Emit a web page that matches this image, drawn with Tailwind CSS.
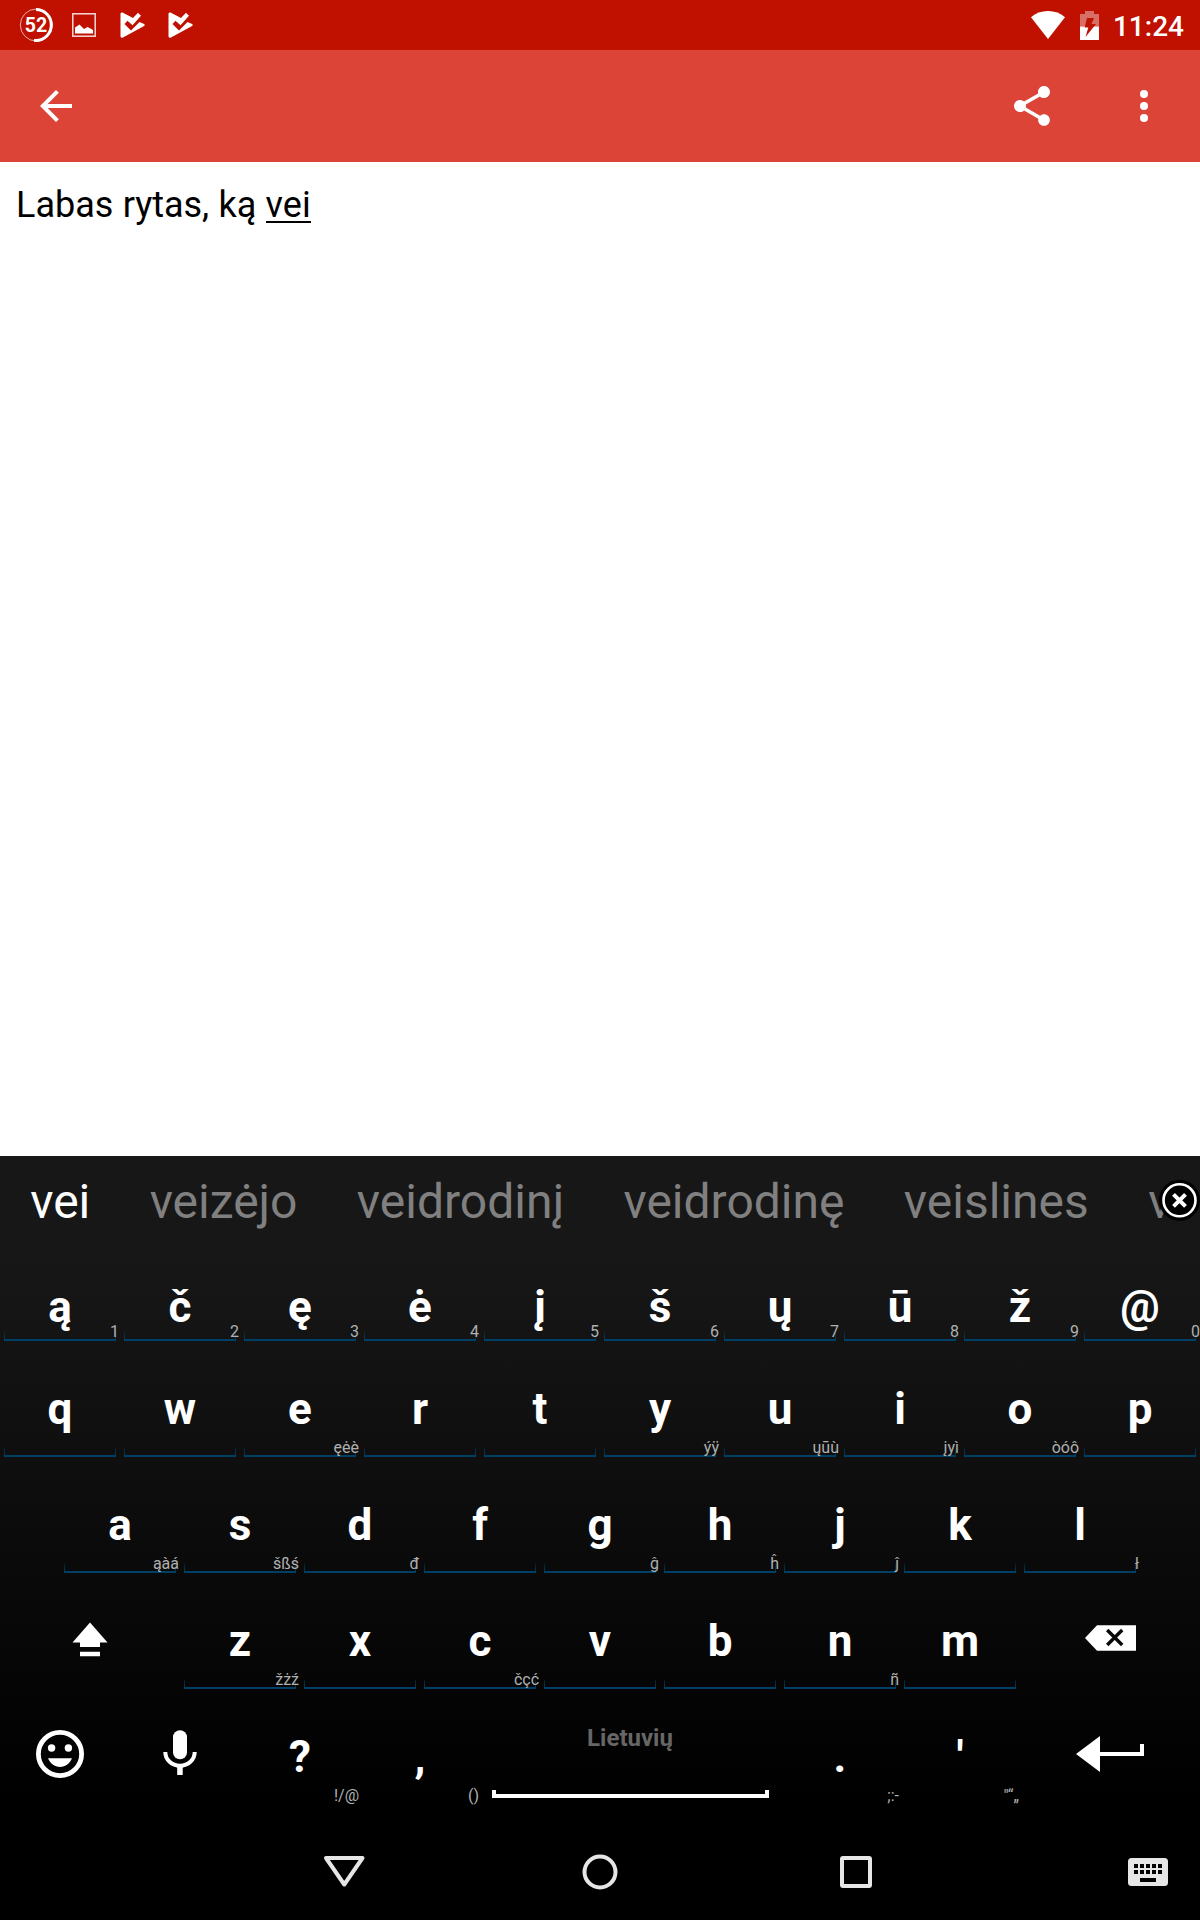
<!DOCTYPE html>
<html lang="lt">
<head>
<meta charset="utf-8">
<title>Labas rytas</title>
<script src="https://cdn.jsdelivr.net/npm/@tailwindcss/browser@4"></script>
</head>
<body class="bg-white font-['Roboto',sans-serif] w-[1200px] h-[1920px] overflow-hidden flex flex-col">

<!-- status bar -->
<header class="h-[50px] shrink-0 bg-[#bf1000] text-white flex items-center justify-between pl-[19px] pr-[16px]">
  <div class="flex items-center h-full">
    <div class="w-[35px] h-[50px] flex items-center justify-center relative">
      <svg class="absolute inset-0" width="35" height="50" viewBox="0 0 35 50" fill="none" stroke="#fff"><circle cx="17.3" cy="25" r="16" stroke-width="1" opacity=".65"/><path d="M17 9.5a15.3 15.5 0 0 1 0 31h-2" stroke-width="3"/></svg>
      <span class="text-[19.5px] font-bold leading-[20px] pt-[2px] pr-px relative">52</span>
    </div>
    <svg class="ml-[18px]" width="24" height="24" viewBox="0 0 24 24"><rect x=".8" y=".8" width="22.4" height="22.4" fill="none" stroke="#fff" stroke-opacity=".85" stroke-width="1.5"/><path d="M3 20.5v-6l4.500-3 4.500 4.500 3.500-2 2 1 3.500 2v3.500z" fill="#fff"/></svg>
    <svg class="ml-[24px]" width="26" height="26" viewBox="0 0 26 26"><path d="M.5 1.500Q1 0 2.500.5L13 6l5-5.200 3 3-8.500 9.500-5-4.500-3 3.200L11 18.500 19.500 10l4.600 2q1.200.8 0 2L3 25.500q-2 .8-2.500-1z" fill="#fff"/></svg>
    <svg class="ml-[22px]" width="26" height="26" viewBox="0 0 26 26"><path d="M.5 1.500Q1 0 2.500.5L13 6l5-5.200 3 3-8.500 9.500-5-4.500-3 3.200L11 18.500 19.500 10l4.600 2q1.200.8 0 2L3 25.500q-2 .8-2.500-1z" fill="#fff"/></svg>
  </div>
  <div class="flex items-center">
    <svg width="34" height="28" viewBox="0 0 34 28"><path d="M17 28 0 6.200Q7 0 17 0t17 6.200z" fill="#fff"/></svg>
    <svg class="ml-[15px]" width="19" height="29" viewBox="0 0 19 29"><path d="M5 0h9v3h5v12.500H0V3h5z" fill="#fff" opacity=".4"/><path d="M0 15.500h19V29H0z" fill="#fff"/><path d="M7 7h7l-2.500 6H16L5.500 26l2.800-9.500H4.700z" fill="#bf1000"/></svg>
    <span class="ml-[14px] text-[28px] font-medium leading-[28px] pt-[4px]">11:24</span>
  </div>
</header>

<!-- app bar -->
<nav class="h-[112px] shrink-0 bg-[#db4437] flex items-center justify-between pl-[32px] pr-[32px]">
  <svg width="48" height="48" viewBox="0 0 24 24" fill="#fff"><path d="M20 11H7.830l5.590-5.590L12 4l-8 8 8 8 1.410-1.410L7.830 13H20z"/></svg>
  <div class="flex gap-16">
    <svg width="48" height="48" viewBox="0 0 24 24" fill="#fff"><path d="M18 16.080c-.76 0-1.440.3-1.960.77L8.910 12.700c.05-.23.09-.46.09-.7s-.04-.47-.09-.7l7.050-4.110c.54.5 1.250.81 2.040.81 1.660 0 3-1.340 3-3s-1.340-3-3-3-3 1.340-3 3c0 .24.04.47.09.7L8.040 9.810C7.500 9.310 6.790 9 6 9c-1.660 0-3 1.340-3 3s1.340 3 3 3c.79 0 1.500-.31 2.040-.81l7.120 4.160c-.05.21-.08.43-.08.65 0 1.610 1.310 2.920 2.920 2.920s2.920-1.310 2.920-2.920-1.310-2.920-2.920-2.920z"/></svg>
    <svg width="48" height="48" viewBox="0 0 24 24" fill="#fff"><circle cx="12" cy="6" r="2"/><circle cx="12" cy="12" r="2"/><circle cx="12" cy="18" r="2"/></svg>
  </div>
</nav>

<!-- editor -->
<main class="h-[994px] shrink-0 px-[16px] pt-[21px] text-[36px] leading-[44px] [word-spacing:0.35px] text-black">Labas rytas, ką <span class="inline-block h-[40px] border-b-2 border-black">vei</span></main>

<!-- keyboard -->
<section class="flex-1 flex flex-col bg-black">
  <div class="h-[101px] shrink-0 bg-[#171717] relative overflow-hidden flex whitespace-nowrap text-[48px] leading-[56px] pt-[18px] pl-[0.5px] text-[#808080]">
    <span class="px-[29.7px] text-white">vei</span><span class="px-[29.7px]">veizėjo</span><span class="px-[29.7px]">veidrodinį</span><span class="px-[29.7px]">veidrodinę</span><span class="px-[29.7px]">veislines</span><span class="pl-[29.7px]">v</span>
    <svg class="absolute right-0 top-[23px]" width="42" height="42" viewBox="0 0 42 42"><circle cx="21.500" cy="21.300" r="20.500" fill="#000"/><circle cx="21.500" cy="21.300" r="16" fill="none" stroke="#fff" stroke-width="2.600"/><path d="m15.500 15.300 12 12m0-12-12 12" stroke="#fff" stroke-width="4"/></svg>
  </div>

  <div id="keys" class="shrink-0 bg-linear-to-b/srgb from-[#171717] to-black text-white"></div>

  <!-- navigation bar -->
  <footer class="flex-1 relative">
    <svg width="1200" height="115" viewBox="0 1805 1200 115" fill="none" stroke="#e6e6e6" stroke-width="4"><path d="M326 1858h36.500l-18.250 26.500z" stroke-linejoin="round"/><circle cx="600" cy="1872" r="15.500"/><rect x="842" y="1858" width="28" height="28" rx="1"/><g stroke="none"><rect x="1128" y="1858" width="40" height="28" rx="3.500" fill="#e6e6e6"/><path fill="#000" d="M1134 1864h4v4h-4zm6 0h4v4h-4zm6 0h4v4h-4zm6 0h4v4h-4zm6 0h4v4h-4zm-24 6h4v4h-4zm6 0h4v4h-4zm6 0h4v4h-4zm6 0h4v4h-4zm6 0h4v4h-4zm-18 8h16v4h-16z"/></g></svg>
  </footer>
</section>

<script>
const hint = t => t ? `<span class="absolute right-px bottom-px text-[16px] leading-[16px] text-[#b0b0b0] whitespace-nowrap">${t}</span>` : '';
const frame = `<span class="absolute left-[4px] right-[4px] bottom-0 h-[2px] bg-[#003f66]"></span><span class="absolute left-[4px] bottom-0 w-px h-[9px] bg-linear-to-t from-[#003f66] to-[#003f66]/40"></span><span class="absolute right-[4px] bottom-0 w-px h-[9px] bg-linear-to-t from-[#003f66] to-[#003f66]/40"></span>`;
const key = ([c, h], lined, mb) => `<div class="relative w-[120px] h-full flex flex-col justify-end items-center">${lined ? frame : ''}<span class="text-[44px] font-bold leading-[44px] ${mb}">${c}</span>${hint(h)}</div>`;
const row = (list, lined = true, mb = 'mb-[26px]') => list.map(k => key(k, lined, mb)).join('');
const icon = (w, inner) => `<svg width="${w}" height="116" viewBox="0 0 ${w} 116" fill="#fff">${inner}</svg>`;

const shift = icon(180, '<path d="M90 49.500 107.500 69.500H100V74H80v-4.500h-7.500zM80 78.700h20v4.500H80z"/>');
const backspace = icon(180, '<path d="M65 65 77 52.300h39v25.400H77z"/><path d="m87.200 57 15 15m0-15-15 15" stroke="#080808" stroke-width="3.400"/>');
const smile = icon(120, '<circle cx="60" cy="65" r="21.600" fill="none" stroke="#fff" stroke-width="4.800"/><circle cx="51.600" cy="59" r="3.700"/><circle cx="68.400" cy="59" r="3.700"/><path d="M48 69.300h24c-2 5.200-6.600 8.600-12 8.600s-10-3.400-12-8.600z"/>');
const mic = icon(120, '<rect x="53" y="41.300" width="14" height="29" rx="7"/><path d="M45.300 63c0 7.800 6.500 13.700 14.700 13.700S74.700 70.800 74.700 63" fill="none" stroke="#fff" stroke-width="4"/><path d="M57.200 76h5.500v10h-5.500z"/>');
const enter = icon(180, '<path d="m56 65 24-18v16h40v-8h4v12H80v16z"/>');
const space = `<div class="w-[300px] h-full flex flex-col items-center pt-[37px]"><span class="text-[24px] leading-[24px] font-bold text-[#666]">Lietuvių</span><span class="mt-[40px] w-[277px] h-[8px] border-4 border-t-0 border-white"></span></div>`;

document.getElementById('keys').innerHTML =
  `<div class="h-[84px] flex">${row([['ą','1'],['č','2'],['ę','3'],['ė','4'],['į','5'],['š','6'],['ų','7'],['ū','8'],['ž','9']], true, 'mb-[12px]')}<div class="relative w-[120px] h-full flex flex-col justify-end items-center">${frame}<span class="text-[44px] font-bold leading-[44px] mb-[12px]">@</span><span class="absolute right-0 bottom-px text-[16px] leading-[16px] text-[#b0b0b0]">0</span></div></div>` +
  `<div class="h-[116px] flex">${row([['q'],['w'],['e','ęėè'],['r'],['t'],['y','ýÿ'],['u','ųūù'],['i','įyì'],['o','òóô'],['p']])}</div>` +
  `<div class="h-[116px] flex justify-center">${row([['a','ąàá'],['s','šßś'],['d','đ'],['f'],['g','ĝ'],['h','ĥ'],['j','ĵ'],['k'],['l','ł']])}</div>` +
  `<div class="h-[116px] flex">${shift}${row([['z','žżź'],['x'],['c','čçć'],['v'],['b'],['n','ñ'],['m']])}${backspace}</div>` +
  `<div class="h-[116px] flex">${smile}${mic}${row([['?','!/@'],[',','()']], false)}${space}${row([['.',';:-'],["'",'"“„']], false)}${enter}</div>`;
</script>
</body>
</html>
